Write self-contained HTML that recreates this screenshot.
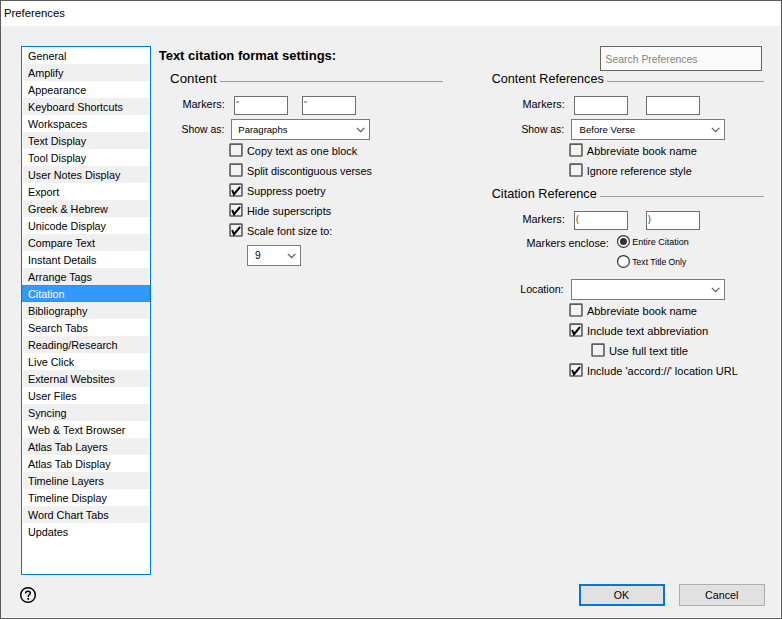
<!DOCTYPE html><html><head><meta charset="utf-8"><style>
html,body{margin:0;padding:0;} body{width:782px;height:619px;position:relative;overflow:hidden;background:#f0f0f0;font-family:"Liberation Sans", sans-serif;}
.t{position:absolute;white-space:pre;line-height:20px;font-family:"Liberation Sans",sans-serif;}
</style></head><body>
<div style="position:absolute;left:0px;top:0px;width:782px;height:26px;box-sizing:border-box;background:#fff"></div>
<div style="position:absolute;left:0px;top:0px;width:782px;height:619px;box-sizing:border-box;border:1px solid #5a5a5a"></div>
<div style="position:absolute;left:780px;top:26px;width:1px;height:592px;box-sizing:border-box;background:#fafafa"></div>
<div style="position:absolute;left:1px;top:617px;width:780px;height:1px;box-sizing:border-box;background:#fafafa"></div>
<div class="t" style="left:4px;top:3px;font-size:11.3px;font-weight:normal;color:#000;">Preferences</div>
<div style="position:absolute;left:21px;top:46px;width:130px;height:529px;box-sizing:border-box;background:#fff;border:1px solid #0078d7"></div>
<div class="t" style="left:28px;top:46px;font-size:10.8px;font-weight:normal;color:#000;">General</div>
<div style="position:absolute;left:23px;top:64px;width:126px;height:17px;box-sizing:border-box;background:#f0f0f0"></div>
<div class="t" style="left:28px;top:63px;font-size:10.8px;font-weight:normal;color:#000;">Amplify</div>
<div class="t" style="left:28px;top:80px;font-size:10.8px;font-weight:normal;color:#000;">Appearance</div>
<div style="position:absolute;left:23px;top:98px;width:126px;height:17px;box-sizing:border-box;background:#f0f0f0"></div>
<div class="t" style="left:28px;top:97px;font-size:10.8px;font-weight:normal;color:#000;">Keyboard Shortcuts</div>
<div class="t" style="left:28px;top:114px;font-size:10.8px;font-weight:normal;color:#000;">Workspaces</div>
<div style="position:absolute;left:23px;top:132px;width:126px;height:17px;box-sizing:border-box;background:#f0f0f0"></div>
<div class="t" style="left:28px;top:131px;font-size:10.8px;font-weight:normal;color:#000;">Text Display</div>
<div class="t" style="left:28px;top:148px;font-size:10.8px;font-weight:normal;color:#000;">Tool Display</div>
<div style="position:absolute;left:23px;top:166px;width:126px;height:17px;box-sizing:border-box;background:#f0f0f0"></div>
<div class="t" style="left:28px;top:165px;font-size:10.8px;font-weight:normal;color:#000;">User Notes Display</div>
<div class="t" style="left:28px;top:182px;font-size:10.8px;font-weight:normal;color:#000;">Export</div>
<div style="position:absolute;left:23px;top:200px;width:126px;height:17px;box-sizing:border-box;background:#f0f0f0"></div>
<div class="t" style="left:28px;top:199px;font-size:10.8px;font-weight:normal;color:#000;">Greek &amp; Hebrew</div>
<div class="t" style="left:28px;top:216px;font-size:10.8px;font-weight:normal;color:#000;">Unicode Display</div>
<div style="position:absolute;left:23px;top:234px;width:126px;height:17px;box-sizing:border-box;background:#f0f0f0"></div>
<div class="t" style="left:28px;top:233px;font-size:10.8px;font-weight:normal;color:#000;">Compare Text</div>
<div class="t" style="left:28px;top:250px;font-size:10.8px;font-weight:normal;color:#000;">Instant Details</div>
<div style="position:absolute;left:23px;top:268px;width:126px;height:17px;box-sizing:border-box;background:#f0f0f0"></div>
<div class="t" style="left:28px;top:267px;font-size:10.8px;font-weight:normal;color:#000;">Arrange Tags</div>
<div style="position:absolute;left:22px;top:285px;width:128px;height:17px;box-sizing:border-box;background:#3399ff;outline:1px dotted #c06a00;outline-offset:-1px"></div>
<div class="t" style="left:28px;top:284px;font-size:10.8px;font-weight:normal;color:#fff;">Citation</div>
<div style="position:absolute;left:23px;top:302px;width:126px;height:17px;box-sizing:border-box;background:#f0f0f0"></div>
<div class="t" style="left:28px;top:301px;font-size:10.8px;font-weight:normal;color:#000;">Bibliography</div>
<div class="t" style="left:28px;top:318px;font-size:10.8px;font-weight:normal;color:#000;">Search Tabs</div>
<div style="position:absolute;left:23px;top:336px;width:126px;height:17px;box-sizing:border-box;background:#f0f0f0"></div>
<div class="t" style="left:28px;top:335px;font-size:10.8px;font-weight:normal;color:#000;">Reading/Research</div>
<div class="t" style="left:28px;top:352px;font-size:10.8px;font-weight:normal;color:#000;">Live Click</div>
<div style="position:absolute;left:23px;top:370px;width:126px;height:17px;box-sizing:border-box;background:#f0f0f0"></div>
<div class="t" style="left:28px;top:369px;font-size:10.8px;font-weight:normal;color:#000;">External Websites</div>
<div class="t" style="left:28px;top:386px;font-size:10.8px;font-weight:normal;color:#000;">User Files</div>
<div style="position:absolute;left:23px;top:404px;width:126px;height:17px;box-sizing:border-box;background:#f0f0f0"></div>
<div class="t" style="left:28px;top:403px;font-size:10.8px;font-weight:normal;color:#000;">Syncing</div>
<div class="t" style="left:28px;top:420px;font-size:10.8px;font-weight:normal;color:#000;">Web &amp; Text Browser</div>
<div style="position:absolute;left:23px;top:438px;width:126px;height:17px;box-sizing:border-box;background:#f0f0f0"></div>
<div class="t" style="left:28px;top:437px;font-size:10.8px;font-weight:normal;color:#000;">Atlas Tab Layers</div>
<div class="t" style="left:28px;top:454px;font-size:10.8px;font-weight:normal;color:#000;">Atlas Tab Display</div>
<div style="position:absolute;left:23px;top:472px;width:126px;height:17px;box-sizing:border-box;background:#f0f0f0"></div>
<div class="t" style="left:28px;top:471px;font-size:10.8px;font-weight:normal;color:#000;">Timeline Layers</div>
<div class="t" style="left:28px;top:488px;font-size:10.8px;font-weight:normal;color:#000;">Timeline Display</div>
<div style="position:absolute;left:23px;top:506px;width:126px;height:17px;box-sizing:border-box;background:#f0f0f0"></div>
<div class="t" style="left:28px;top:505px;font-size:10.8px;font-weight:normal;color:#000;">Word Chart Tabs</div>
<div class="t" style="left:28px;top:522px;font-size:10.8px;font-weight:normal;color:#000;">Updates</div>
<div class="t" style="left:158.7px;top:46px;font-size:13px;font-weight:bold;color:#000;">Text citation format settings:</div>
<div class="t" style="left:170.1px;top:69px;font-size:13.3px;font-weight:normal;color:#000;">Content</div>
<div style="position:absolute;left:220px;top:81px;width:223px;height:1px;box-sizing:border-box;background:#a0a0a0"></div>
<div style="position:absolute;left:443px;top:81px;width:1px;height:1px;box-sizing:border-box;background:#fff"></div>
<div style="position:absolute;left:219px;top:81px;width:1px;height:1px;box-sizing:border-box;background:#fff"></div>
<div class="t" style="left:182.4px;top:94px;font-size:10.9px;font-weight:normal;color:#000;">Markers:</div>
<div style="position:absolute;left:234px;top:96px;width:54px;height:19px;box-sizing:border-box;background:#fff;border:1px solid #6e6e6e"></div>
<div style="position:absolute;left:302px;top:96px;width:54px;height:19px;box-sizing:border-box;background:#fff;border:1px solid #6e6e6e"></div>
<div style="position:absolute;left:236px;top:101px;width:3px;height:2px;background:#b8a8c8"></div>
<div style="position:absolute;left:304px;top:101px;width:3px;height:2px;background:#b8a8c8"></div>
<div class="t" style="left:181.6px;top:120px;font-size:10.4px;font-weight:normal;color:#000;">Show as:</div>
<div style="position:absolute;left:231px;top:119px;width:139px;height:21px;box-sizing:border-box;background:#fff;border:1px solid #7a7a7a"></div>
<svg style="position:absolute;left:356px;top:127px" width="10" height="6" viewBox="0 0 10 6"><path d="M0.8 0.8 L4.6 4.6 L8.4 0.8" fill="none" stroke="#555" stroke-width="1.1"/></svg>
<div class="t" style="left:238.3px;top:120px;font-size:9.5px;font-weight:normal;color:#000;">Paragraphs</div>
<svg style="position:absolute;left:229px;top:143px" width="15" height="15" viewBox="0 0 15 15"><rect x="1.05" y="1.05" width="11.9" height="11.9" rx="0.4" fill="#f3f3f3" stroke="#5e5e5e" stroke-width="1.65"/></svg>
<div class="t" style="left:247px;top:141px;font-size:10.9px;font-weight:normal;color:#000;">Copy text as one block</div>
<svg style="position:absolute;left:229px;top:163px" width="15" height="15" viewBox="0 0 15 15"><rect x="1.05" y="1.05" width="11.9" height="11.9" rx="0.4" fill="#f3f3f3" stroke="#5e5e5e" stroke-width="1.65"/></svg>
<div class="t" style="left:247px;top:161px;font-size:10.8px;font-weight:normal;color:#000;">Split discontiguous verses</div>
<svg style="position:absolute;left:229px;top:183px" width="15" height="15" viewBox="0 0 15 15"><rect x="1.05" y="1.05" width="11.9" height="11.9" rx="0.4" fill="#f3f3f3" stroke="#5e5e5e" stroke-width="1.65"/><path d="M3.5 7.8 L5 11.2 L10.5 4.6" fill="none" stroke="#000" stroke-width="2.1" stroke-linecap="round" stroke-linejoin="miter"/></svg>
<div class="t" style="left:247px;top:181px;font-size:10.8px;font-weight:normal;color:#000;">Suppress poetry</div>
<svg style="position:absolute;left:229px;top:203px" width="15" height="15" viewBox="0 0 15 15"><rect x="1.05" y="1.05" width="11.9" height="11.9" rx="0.4" fill="#f3f3f3" stroke="#5e5e5e" stroke-width="1.65"/><path d="M3.5 7.8 L5 11.2 L10.5 4.6" fill="none" stroke="#000" stroke-width="2.1" stroke-linecap="round" stroke-linejoin="miter"/></svg>
<div class="t" style="left:247px;top:201px;font-size:10.9px;font-weight:normal;color:#000;">Hide superscripts</div>
<svg style="position:absolute;left:229px;top:223px" width="15" height="15" viewBox="0 0 15 15"><rect x="1.05" y="1.05" width="11.9" height="11.9" rx="0.4" fill="#f3f3f3" stroke="#5e5e5e" stroke-width="1.65"/><path d="M3.5 7.8 L5 11.2 L10.5 4.6" fill="none" stroke="#000" stroke-width="2.1" stroke-linecap="round" stroke-linejoin="miter"/></svg>
<div class="t" style="left:247px;top:221px;font-size:10.8px;font-weight:normal;color:#000;">Scale font size to:</div>
<div style="position:absolute;left:247px;top:245px;width:54px;height:21px;box-sizing:border-box;background:#fff;border:1px solid #7a7a7a"></div>
<svg style="position:absolute;left:287px;top:253px" width="10" height="6" viewBox="0 0 10 6"><path d="M0.8 0.8 L4.6 4.6 L8.4 0.8" fill="none" stroke="#555" stroke-width="1.1"/></svg>
<div class="t" style="left:255px;top:246px;font-size:10.2px;font-weight:normal;color:#000;">9</div>
<div style="position:absolute;left:600px;top:46px;width:162px;height:25px;box-sizing:border-box;background:#fafafa;border:1px solid #6d6262"></div>
<div class="t" style="left:605.6px;top:50px;font-size:10.4px;font-weight:normal;color:#858585;">Search Preferences</div>
<div class="t" style="left:491.7px;top:69px;font-size:12.6px;font-weight:normal;color:#000;">Content References</div>
<div style="position:absolute;left:607px;top:81px;width:157px;height:1px;box-sizing:border-box;background:#a0a0a0"></div>
<div style="position:absolute;left:764px;top:81px;width:1px;height:1px;box-sizing:border-box;background:#fff"></div>
<div style="position:absolute;left:606px;top:81px;width:1px;height:1px;box-sizing:border-box;background:#fff"></div>
<div class="t" style="left:522.4px;top:94px;font-size:10.9px;font-weight:normal;color:#000;">Markers:</div>
<div style="position:absolute;left:574px;top:96px;width:54px;height:19px;box-sizing:border-box;background:#fff;border:1px solid #6e6e6e"></div>
<div style="position:absolute;left:646px;top:96px;width:54px;height:19px;box-sizing:border-box;background:#fff;border:1px solid #6e6e6e"></div>
<div class="t" style="left:521.4px;top:120px;font-size:10.4px;font-weight:normal;color:#000;">Show as:</div>
<div style="position:absolute;left:571px;top:119px;width:154px;height:21px;box-sizing:border-box;background:#fff;border:1px solid #7a7a7a"></div>
<svg style="position:absolute;left:711px;top:127px" width="10" height="6" viewBox="0 0 10 6"><path d="M0.8 0.8 L4.6 4.6 L8.4 0.8" fill="none" stroke="#555" stroke-width="1.1"/></svg>
<div class="t" style="left:579.6px;top:120px;font-size:9.6px;font-weight:normal;color:#000;">Before Verse</div>
<svg style="position:absolute;left:569px;top:143px" width="15" height="15" viewBox="0 0 15 15"><rect x="1.05" y="1.05" width="11.9" height="11.9" rx="0.4" fill="#f3f3f3" stroke="#5e5e5e" stroke-width="1.65"/></svg>
<div class="t" style="left:586.8px;top:141px;font-size:11.0px;font-weight:normal;color:#000;">Abbreviate book name</div>
<svg style="position:absolute;left:569px;top:163px" width="15" height="15" viewBox="0 0 15 15"><rect x="1.05" y="1.05" width="11.9" height="11.9" rx="0.4" fill="#f3f3f3" stroke="#5e5e5e" stroke-width="1.65"/></svg>
<div class="t" style="left:586.8px;top:161px;font-size:10.85px;font-weight:normal;color:#000;">Ignore reference style</div>
<div class="t" style="left:491.7px;top:184px;font-size:12.7px;font-weight:normal;color:#000;">Citation Reference</div>
<div style="position:absolute;left:600px;top:196px;width:164px;height:1px;box-sizing:border-box;background:#a0a0a0"></div>
<div style="position:absolute;left:764px;top:196px;width:1px;height:1px;box-sizing:border-box;background:#fff"></div>
<div style="position:absolute;left:599px;top:196px;width:1px;height:1px;box-sizing:border-box;background:#fff"></div>
<div class="t" style="left:522.4px;top:209px;font-size:10.9px;font-weight:normal;color:#000;">Markers:</div>
<div style="position:absolute;left:574px;top:211px;width:54px;height:19px;box-sizing:border-box;background:#fff;border:1px solid #6e6e6e"></div>
<div style="position:absolute;left:646px;top:211px;width:54px;height:19px;box-sizing:border-box;background:#fff;border:1px solid #6e6e6e"></div>
<div class="t" style="left:576px;top:209px;font-size:8.3px;font-weight:normal;color:#222;">(</div>
<div class="t" style="left:648px;top:209px;font-size:8.3px;font-weight:normal;color:#222;">)</div>
<div class="t" style="left:526.6px;top:233px;font-size:10.8px;font-weight:normal;color:#000;">Markers enclose:</div>
<svg style="position:absolute;left:615px;top:233px" width="16" height="16" viewBox="0 0 16 16"><circle cx="8.45" cy="8.45" r="5.9" fill="#fff" stroke="#333" stroke-width="1.2"/><circle cx="8.45" cy="8.45" r="3.5" fill="#333"/></svg>
<div class="t" style="left:632.3px;top:232px;font-size:9.0px;font-weight:normal;color:#000;">Entire Citation</div>
<svg style="position:absolute;left:615px;top:253px" width="16" height="16" viewBox="0 0 16 16"><circle cx="8.45" cy="8.45" r="5.9" fill="#fff" stroke="#333" stroke-width="1.2"/></svg>
<div class="t" style="left:632.3px;top:252px;font-size:8.6px;font-weight:normal;color:#000;">Text Title Only</div>
<div class="t" style="left:520.2px;top:279px;font-size:10.7px;font-weight:normal;color:#000;">Location:</div>
<div style="position:absolute;left:571px;top:279px;width:154px;height:21px;box-sizing:border-box;background:#fff;border:1px solid #7a7a7a"></div>
<svg style="position:absolute;left:711px;top:287px" width="10" height="6" viewBox="0 0 10 6"><path d="M0.8 0.8 L4.6 4.6 L8.4 0.8" fill="none" stroke="#555" stroke-width="1.1"/></svg>
<svg style="position:absolute;left:569px;top:303px" width="15" height="15" viewBox="0 0 15 15"><rect x="1.05" y="1.05" width="11.9" height="11.9" rx="0.4" fill="#f3f3f3" stroke="#5e5e5e" stroke-width="1.65"/></svg>
<div class="t" style="left:586.9px;top:301px;font-size:11.0px;font-weight:normal;color:#000;">Abbreviate book name</div>
<svg style="position:absolute;left:569px;top:323px" width="15" height="15" viewBox="0 0 15 15"><rect x="1.05" y="1.05" width="11.9" height="11.9" rx="0.4" fill="#f3f3f3" stroke="#5e5e5e" stroke-width="1.65"/><path d="M3.5 7.8 L5 11.2 L10.5 4.6" fill="none" stroke="#000" stroke-width="2.1" stroke-linecap="round" stroke-linejoin="miter"/></svg>
<div class="t" style="left:586.9px;top:321px;font-size:11.2px;font-weight:normal;color:#000;">Include text abbreviation</div>
<svg style="position:absolute;left:591px;top:343px" width="15" height="15" viewBox="0 0 15 15"><rect x="1.05" y="1.05" width="11.9" height="11.9" rx="0.4" fill="#f3f3f3" stroke="#5e5e5e" stroke-width="1.65"/></svg>
<div class="t" style="left:608.9px;top:341px;font-size:11.2px;font-weight:normal;color:#000;">Use full text title</div>
<svg style="position:absolute;left:569px;top:363px" width="15" height="15" viewBox="0 0 15 15"><rect x="1.05" y="1.05" width="11.9" height="11.9" rx="0.4" fill="#f3f3f3" stroke="#5e5e5e" stroke-width="1.65"/><path d="M3.5 7.8 L5 11.2 L10.5 4.6" fill="none" stroke="#000" stroke-width="2.1" stroke-linecap="round" stroke-linejoin="miter"/></svg>
<div class="t" style="left:586.9px;top:361px;font-size:11.0px;font-weight:normal;color:#000;">Include 'accord://' location URL</div>
<div style="position:absolute;left:579px;top:584px;width:86px;height:22px;box-sizing:border-box;background:#e1e1e1;border:2px solid #0078d7"></div>
<div class="t" style="left:613.7px;top:585px;font-size:10.6px;font-weight:normal;color:#000;">OK</div>
<div style="position:absolute;left:679px;top:584px;width:86px;height:22px;box-sizing:border-box;background:#e1e1e1;border:1px solid #adadad"></div>
<div class="t" style="left:705.1px;top:585px;font-size:10.7px;font-weight:normal;color:#000;">Cancel</div>
<svg style="position:absolute;left:19px;top:586px" width="18" height="18" viewBox="0 0 18 18"><circle cx="9" cy="9" r="7.3" fill="none" stroke="#000" stroke-width="1.45"/><path d="M6.6 7.5 Q6.6 5.3 9 5.3 Q11.3 5.3 11.3 7.1 Q11.3 8.3 9.9 9.1 Q9.2 9.5 9.2 10.9" fill="none" stroke="#000" stroke-width="1.5"/><rect x="8.3" y="12.0" width="1.8" height="1.7" fill="#000"/></svg>
</body></html>
